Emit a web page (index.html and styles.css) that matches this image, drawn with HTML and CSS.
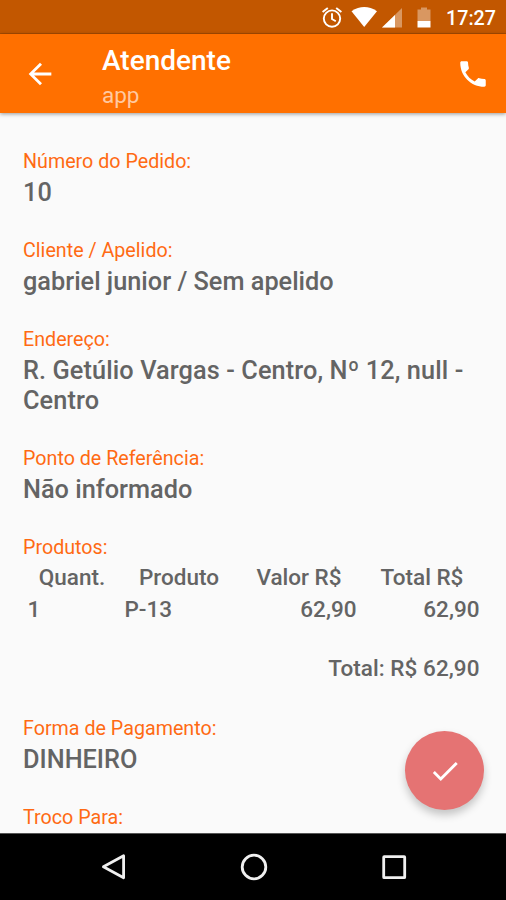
FILE: index.html
```html
<!DOCTYPE html>
<html lang="pt-BR">
<head>
<meta charset="utf-8">
<title>Atendente</title>
<link rel="stylesheet" href="styles.css">
</head>
<body>
<div class="screen">
  <div class="status-bar">
    <svg class="status-icons" width="112" height="34" viewBox="0 0 112 34">
      <g fill="none" stroke="#fff" stroke-width="1.9">
        <circle cx="12" cy="18.6" r="8.2"/>
        <path d="M12 13.2v5.8l3.8 2.3M2.6 12l5.2-4.1M21.4 12l-5.2-4.1"/>
      </g>
      <path fill="#fff" d="M31.5 11.2Q44.2 2.8 57 11.2L44.2 27z"/>
      <path fill="#fff" fill-opacity=".38" d="M82 8v19.5H62z"/>
      <path fill="#fff" d="M75 14.9v12.6H62z"/>
      <path fill="#fff" fill-opacity=".38" d="M97.5 9.5h3.5V7.5h6v2h3.5V21h-13z"/>
      <path fill="#fff" d="M97.5 21h13v6.5h-13z"/>
    </svg>
    <span class="clock">17:27</span>
  </div>
  <header class="app-bar">
    <svg class="back" width="34" height="34" viewBox="0 0 24 24"><path fill="#fff" d="M20 11H7.83l5.59-5.59L12 4l-8 8 8 8 1.41-1.41L7.83 13H20v-2z"/></svg>
    <div class="titles">
      <h1 class="title">Atendente</h1>
      <p class="subtitle">app</p>
    </div>
    <svg class="call" width="34" height="34" viewBox="0 0 24 24"><path fill="#fff" d="M6.62 10.79c1.44 2.83 3.76 5.14 6.59 6.59l2.2-2.2c.27-.27.67-.36 1.02-.24 1.12.37 2.33.57 3.57.57.55 0 1 .45 1 1V20c0 .55-.45 1-1 1-9.39 0-17-7.61-17-17 0-.55.45-1 1-1h3.5c.55 0 1 .45 1 1 0 1.25.2 2.45.57 3.57.11.35.03.74-.25 1.02l-2.2 2.2z"/></svg>
  </header>
  <main class="content">
    <section class="field"><h2 class="label">Número do Pedido:</h2><p class="value">10</p></section>
    <section class="field"><h2 class="label">Cliente / Apelido:</h2><p class="value">gabriel junior / Sem apelido</p></section>
    <section class="field"><h2 class="label">Endereço:</h2><p class="value address">R. Getúlio Vargas - Centro, Nº 12, null - Centro</p></section>
    <section class="field"><h2 class="label">Ponto de Referência:</h2><p class="value">Não informado</p></section>
    <section class="field">
      <h2 class="label">Produtos:</h2>
      <div class="products head"><span>Quant.</span><span>Produto</span><span>Valor R$</span><span>Total R$</span></div>
      <div class="products"><span>1</span><span>P-13</span><span class="num">62,90</span><span class="num">62,90</span></div>
      <p class="total">Total: R$ 62,90</p>
    </section>
    <section class="field"><h2 class="label">Forma de Pagamento:</h2><p class="value">DINHEIRO</p></section>
    <section class="field"><h2 class="label">Troco Para:</h2></section>
    <button class="fab" aria-label="Confirmar"><svg width="34" height="34" viewBox="0 0 24 24"><path fill="#fff" d="M9 16.17L4.83 12l-1.42 1.41L9 19 21 7l-1.41-1.41z"/></svg></button>
  </main>
  <nav class="nav-bar">
    <svg width="28" height="30" viewBox="0 0 28 30"><path d="M23.6 3.8v22L3.4 14.8z"/></svg>
    <svg width="30" height="30" viewBox="0 0 30 30"><circle cx="15" cy="15" r="11.8"/></svg>
    <svg width="28" height="30" viewBox="0 0 28 30"><rect x="3.7" y="4.7" width="21" height="21" rx=".5"/></svg>
  </nav>
</div>
</body>
</html>
```
FILE: styles.css
```css
* { box-sizing: border-box; }
body, h1, h2, p { margin: 0; }
body { font-family: Roboto, "Liberation Sans", sans-serif; background: #fafafa; }
.screen { width: 506px; height: 900px; display: flex; flex-direction: column; overflow: hidden; }
.status-bar { height: 34px; flex: none; background: #c25700; border-bottom: 1px solid #a94c00; display: flex; justify-content: flex-end; align-items: center; padding-right: 10px; color: #fff; }
.status-icons { margin-right: 14px; }
.clock { font-size: 19.7px; font-weight: 500; line-height: 32px; padding-top: 4px; }
.app-bar { position: relative; height: 79px; flex: none; background: #ff7000; color: #fff; display: flex; padding: 0 16px 0 23px; align-items: center; box-shadow: 0 1px 4px rgba(0,0,0,.4); }
.titles { flex: 1; margin-left: 45px; padding-top: 8px; }
.title { font-size: 28px; line-height: 34px; font-weight: 500; }
.subtitle { font-size: 22.5px; line-height: 34px; color: #ffc9a0; }
.content { position: relative; flex: 1; min-height: 0; padding: 37px 23px 0; overflow: hidden; color: #646464; }
.field { margin-bottom: 31.3px; }
.label { font-size: 19.7px; line-height: 23px; font-weight: 400; color: #ff6a13; }
.value { margin-top: 5px; font-size: 25.3px; line-height: 29.7px; font-weight: 500; }
.address { letter-spacing: .1px; }
.products { display: grid; grid-template-columns: 97px 117px 123px 123px; font-size: 22.5px; font-weight: 500; line-height: 32px; }
.head { margin-top: 2px; }
.products span { padding: 0 3.5px 0 4.5px; }
.head span { text-align: center; }
.num { text-align: right; }
.total { font-size: 22.5px; font-weight: 500; line-height: 30px; text-align: right; margin-top: 28px; padding: 0 3.5px 3px 0; letter-spacing: .05px; }
.fab { position: absolute; right: 22px; bottom: 23px; width: 79px; height: 79px; border: 0; padding: 0; border-radius: 50%; background: #e57373; display: flex; align-items: center; justify-content: center; box-shadow: 0 5px 9px rgba(0,0,0,.22); }
.nav-bar { height: 67px; flex: none; background: #000; border-top: 1px solid #555; display: flex; justify-content: space-between; padding: 0 98px 0 100px; align-items: center; }
.nav-bar svg { fill: none; stroke: #f0f0f0; stroke-width: 2.8; stroke-linejoin: round; }
```
